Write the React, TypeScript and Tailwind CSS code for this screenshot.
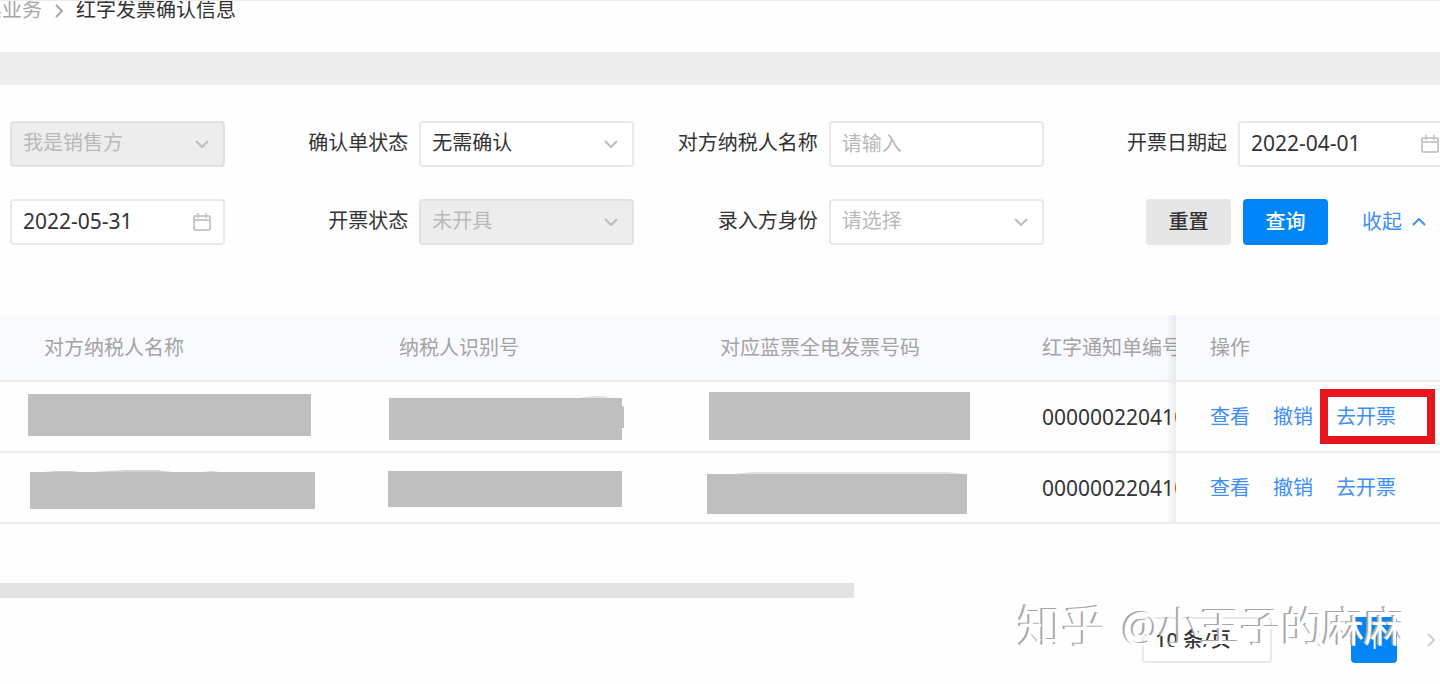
import { useId } from 'react'
import type { ReactNode } from 'react'

const control =
  'h-[46px] w-full appearance-none rounded-sm border-2 border-[#e9e9e9] bg-white pl-[11px] pr-10 pb-0.5 outline-none'

function Chevron({ className = '', d = 'M1 1l6 6 6-6' }: { className?: string; d?: string }) {
  return (
    <svg className={className} width="14" height="8" viewBox="0 0 14 8" fill="none" stroke="currentColor" strokeWidth="2">
      <path d={d} />
    </svg>
  )
}

function CalendarIcon() {
  return (
    <svg
      className="pointer-events-none absolute right-3.5 top-3.5 text-[#c9c9c9]"
      width="18"
      height="18"
      viewBox="0 0 18 18"
      fill="none"
      stroke="currentColor"
      strokeWidth="2"
    >
      <rect x="1" y="3" width="16" height="14" rx="1" />
      <path d="M1 7h16M5 0v5M13 0v5" />
    </svg>
  )
}

function Field({ label, children }: { label?: string; children: (id: string) => ReactNode }) {
  const id = useId()
  return (
    <div className="flex items-center justify-end gap-[11px]">
      {label && (
        <label htmlFor={id} className="pb-0.5 whitespace-nowrap">
          {label}
        </label>
      )}
      <div className="relative w-[215px] shrink-0">{children(id)}</div>
    </div>
  )
}

function SelectField({ label, value, disabled, empty }: { label?: string; value: string; disabled?: boolean; empty?: boolean }) {
  return (
    <Field label={label}>
      {(id) => (
        <>
          <select
            id={id}
            disabled={disabled}
            aria-label={label ? undefined : value}
            className={`${control} disabled:border-[#e2e2e2] disabled:bg-[#ededee] disabled:text-[#b9b9b9] disabled:opacity-100 ${empty ? 'text-[#b9b9b9]' : ''}`}
          >
            <option>{value}</option>
          </select>
          <Chevron className="pointer-events-none absolute right-4 top-[19px] text-[#bdbdbd]" />
        </>
      )}
    </Field>
  )
}

function DateField({ label, value }: { label?: string; value: string }) {
  return (
    <Field label={label}>
      {(id) => (
        <>
          <input id={id} aria-label={label ? undefined : value} defaultValue={value} className={`${control} text-[21px]`} />
          <CalendarIcon />
        </>
      )}
    </Field>
  )
}

// Masked values, one drawing per cell
function Mask({ children }: { children: ReactNode }) {
  return (
    <svg className="block fill-[#bfbfbf]" width="320" height="69" viewBox="0 0 320 69">
      {children}
    </svg>
  )
}

const rows = [
  {
    masks: [
      <rect x="28" y="12" width="283" height="42" />,
      <>
        <path className="fill-[#e4e4e4]" d="M224 16l12-2h14l5 2z" />
        <path d="M34 16h233v8l2 1v21h-2v12H34z" />
      </>,
      <rect x="33" y="10" width="261" height="48" />,
    ],
    code: '000000220410',
    marked: true,
  },
  {
    masks: [
      <>
        <path className="fill-[#d2d2d2]" d="M44 19l10-1h18l8 1zM92 19l34-2h32l14 2zM202 19l9-1 9 1z" />
        <rect x="30" y="19" width="285" height="37" />
      </>,
      <rect x="33" y="18" width="234" height="36" />,
      <>
        <path className="fill-[#e0e0e0]" d="M58 21l18-2h196l14 2z" />
        <rect x="31" y="21" width="260" height="40" />
      </>,
    ],
    code: '000000220410',
    marked: false,
  },
]

const pinned =
  "relative pl-[34px] before:absolute before:inset-y-0 before:-left-2.5 before:w-2.5 before:bg-gradient-to-r before:from-transparent before:to-black/7 before:content-['']"

export default function App() {
  return (
    <div className="relative overflow-hidden border-t border-[#ebebeb] bg-[#fefefe] pb-[21px] font-['Noto_Sans','Noto_Sans_CJK_SC',sans-serif] text-[20px] leading-6 text-[#333]">
      <nav className="-ml-[18px] flex h-[51px] items-start gap-2.5 whitespace-nowrap">
        <a href="#" className="-mt-[3px] text-[#a6a6a6]">
          票业务
        </a>
        <Chevron className="mt-1.5 -rotate-90 text-[#a6a6a6]" />
        <span className="-mt-[3px]">红字发票确认信息</span>
      </nav>
      <div className="h-[33px] bg-[#ededee]" />

      <form className="-mr-[13px] grid grid-cols-[215px_1fr_1fr_1fr] gap-y-8 pt-9 pl-2.5">
        <SelectField value="我是销售方" disabled />
        <SelectField label="确认单状态" value="无需确认" />
        <Field label="对方纳税人名称">
          {(id) => <input id={id} placeholder="请输入" className={`${control} placeholder:text-[#b9b9b9]`} />}
        </Field>
        <DateField label="开票日期起" value="2022-04-01" />
        <DateField value="2022-05-31" />
        <SelectField label="开票状态" value="未开具" disabled />
        <SelectField label="录入方身份" value="请选择" empty />
        <div className="flex items-center justify-end gap-3 pr-[27px]">
          <button type="reset" className="h-[46px] w-[85px] rounded-sm bg-[#e6e6e6] font-medium">
            重置
          </button>
          <button type="button" className="h-[46px] w-[85px] rounded-sm bg-[#0285f6] font-medium text-white">
            查询
          </button>
          <button type="button" className="ml-[22px] flex items-center gap-2.5 text-[#3f8ef5]">
            收起
            <Chevron d="M1 7l6-6 6 6" />
          </button>
        </div>
      </form>

      <table className="mt-[70px] w-full table-fixed border-collapse text-left whitespace-nowrap">
        <colgroup>
          <col className="w-[355px]" />
          <col className="w-[321px]" />
          <col className="w-[322px]" />
          <col className="w-[178px]" />
          <col />
        </colgroup>
        <thead className="bg-[#f9faff] text-[#a3a3a3]">
          <tr className="h-[66px] border-b-2 border-[#ebebee]">
            <th className="pl-11 font-normal">对方纳税人名称</th>
            <th className="pl-11 font-normal">纳税人识别号</th>
            <th className="pl-11 font-normal">对应蓝票全电发票号码</th>
            <th className="overflow-hidden pl-11 font-normal">红字通知单编号</th>
            <th className={`${pinned} font-normal`}>操作</th>
          </tr>
        </thead>
        <tbody>
          {rows.map((row, i) => (
            <tr key={i} className="h-[71px] border-b-2 border-[#ebebee]">
              {row.masks.map((mask, j) => (
                <td key={j} className="p-0">
                  <Mask>{mask}</Mask>
                </td>
              ))}
              <td className="overflow-hidden pl-11 text-[21px]">{row.code}</td>
              <td className={pinned}>
                <div className="flex gap-[23px] text-[#3f8ef5]">
                  <a href="#">查看</a>
                  <a href="#">撤销</a>
                  <a href="#" className="relative">
                    去开票
                    {row.marked && (
                      <span className="absolute -top-4 -left-4 h-[55px] w-[115px] border-8 border-[#e8151d]" />
                    )}
                  </a>
                </div>
              </td>
            </tr>
          ))}
        </tbody>
      </table>

      <div className="mt-[59px] h-[15px] w-[59.3%] bg-[#e3e3e3]" />

      <div className="mt-[19px] flex items-center justify-end pr-0.5">
        <select aria-label="每页条数" className="h-[46px] w-[130px] appearance-none rounded-sm border-2 border-[#e9e9e9] bg-white pl-[11px] font-medium">
          <option>10 条/页</option>
        </select>
        <button type="button" aria-label="上一页" className="ml-[38px] text-[#dcdcdc]">
          <Chevron className="rotate-90" />
        </button>
        <button type="button" className="ml-[27px] size-[46px] rounded-sm bg-[#0285f6] pt-1 text-white">
          1
        </button>
        <button type="button" aria-label="下一页" className="ml-[27px] text-[#cfcfcf]">
          <Chevron className="-rotate-90" />
        </button>
      </div>

      <div className="pointer-events-none absolute right-[35px] bottom-[30px] flex items-center gap-4 text-[41px] leading-[56px] whitespace-nowrap text-white [text-shadow:-2px_-1px_0_#a6a6a6]">
        <span className="text-[44px]">知乎</span>
        <span>@小王子的麻麻</span>
      </div>
    </div>
  )
}
